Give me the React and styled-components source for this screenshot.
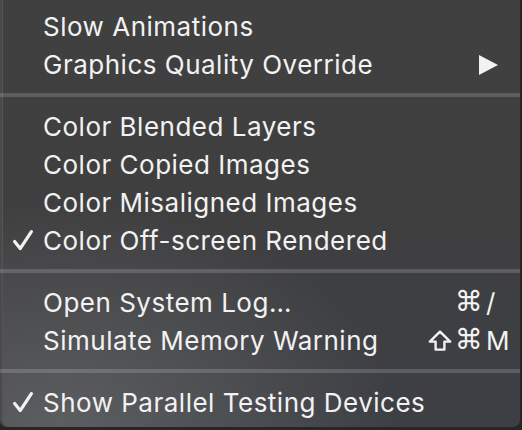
import React from "react"
import styled, { createGlobalStyle } from "styled-components"

const Global = createGlobalStyle`
  html, body {
    margin: 0;
    padding: 0;
    background: #262626;
  }
  body {
    width: 522px;
    height: 430px;
    overflow: hidden;
  }
`

const sections = [
  [
    { label: "Slow Animations" },
    { label: "Graphics Quality Override", submenu: true },
  ],
  [
    { label: "Color Blended Layers" },
    { label: "Color Copied Images" },
    { label: "Color Misaligned Images" },
    { label: "Color Off-screen Rendered", checked: true },
  ],
  [
    { label: "Open System Log…", keyChar: "/" },
    { label: "Simulate Memory Warning", shift: true, keyChar: "M" },
  ],
  [{ label: "Show Parallel Testing Devices", checked: true }],
]

const Check = () => (
  <svg width="22" height="22" viewBox="0 0 22 22">
    <path
      d="M2.6 12.4 L8.2 19.6 L19.4 2.6"
      fill="none"
      stroke="#f2f2f2"
      strokeWidth="3.2"
      strokeLinecap="round"
      strokeLinejoin="round"
    />
  </svg>
)

const Arrow = () => (
  <svg width="19" height="20" viewBox="0 0 19 20">
    <polygon points="0,0 19,10 0,20" fill="#f2f2f2" />
  </svg>
)

const ShiftIcon = () => (
  <svg width="24" height="21" viewBox="0 0 24 21">
    <path
      d="M12 1.6 L22.2 11.6 L16.4 11.6 L16.4 19.6 L7.6 19.6 L7.6 11.6 L1.8 11.6 Z"
      fill="none"
      stroke="#f2f2f2"
      strokeWidth="2.4"
      strokeLinejoin="round"
    />
  </svg>
)

const App = () => {
  return (
    <>
      <Global />
      <Menu>
        {sections.map((items, i) => (
          <React.Fragment key={i}>
            {i > 0 && <Separator />}
            {items.map(item => (
              <Row key={item.label}>
                <Mark>{item.checked && <Check />}</Mark>
                <Label>{item.label}</Label>
                {item.submenu && (
                  <SubArrow>
                    <Arrow />
                  </SubArrow>
                )}
                {item.keyChar && (
                  <Shortcut>
                    <Mods>
                      {item.shift && <ShiftIcon />}
                      <Cmd>⌘</Cmd>
                    </Mods>
                    <Key>{item.keyChar}</Key>
                  </Shortcut>
                )}
              </Row>
            ))}
          </React.Fragment>
        ))}
      </Menu>
    </>
  )
}

const Menu = styled.div`
  width: 520px;
  height: 427px;
  box-sizing: border-box;
  padding-top: 7px;
  border-radius: 0 0 7px 7px;
  box-shadow: inset 2px 0 0 #4a4a4a, inset 3px 0 0 #555;
  background:
    radial-gradient(
      ellipse 340px 230px at 60px 430px,
      rgba(120, 120, 120, 0.55),
      rgba(120, 120, 120, 0) 100%
    ),
    linear-gradient(180deg, #404040 0%, #3f3f40 50%, #3d3f45 100%);
  font-family: Inter, "Open Sans", "DejaVu Sans", sans-serif;
  color: #f2f2f2;
  display: flex;
  flex-direction: column;
`

const Row = styled.div`
  height: 38px;
  display: flex;
  align-items: center;
`

const Mark = styled.div`
  width: 43px;
  flex: none;
  display: flex;
  justify-content: center;
  padding-left: 2px;
  box-sizing: border-box;
`

const Label = styled.span`
  flex: 1;
  font-size: 26px;
  letter-spacing: 0.5px;
  white-space: nowrap;
`

const SubArrow = styled.div`
  width: 41px;
  flex: none;
  display: flex;
  padding-top: 2px;
`

const Shortcut = styled.div`
  display: flex;
  align-items: center;
  font-size: 26px;
  padding-right: 10px;
`

const Mods = styled.span`
  display: flex;
  align-items: center;
  gap: 3px;
`

const Cmd = styled.span`
  font-family: "DejaVu Sans", sans-serif;
  font-size: 28px;
  line-height: 1;
`

const Key = styled.span`
  width: 24px;
  padding-left: 3px;
`

const Separator = styled.div`
  height: 4px;
  margin: 10px 0;
  background: rgba(255, 255, 255, 0.16);
  flex: none;
`

export default App
